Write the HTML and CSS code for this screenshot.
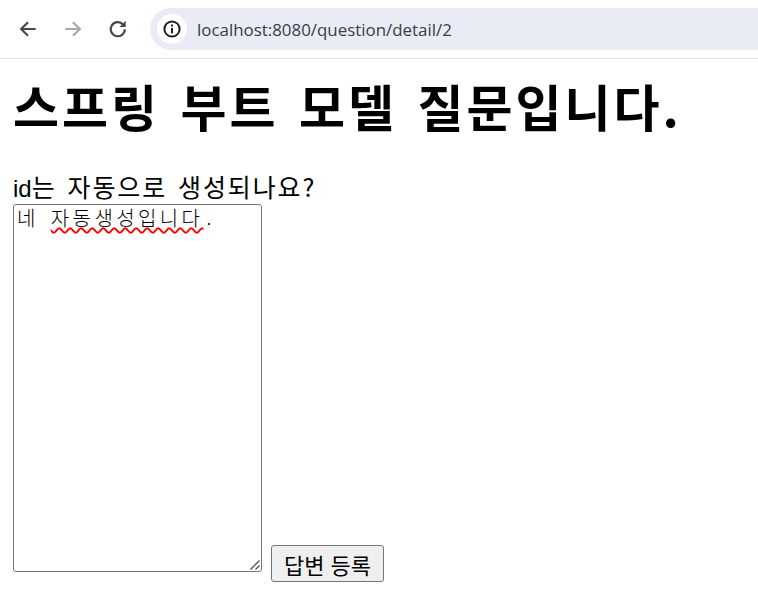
FILE: index.html
```html
<!DOCTYPE html>
<html lang="ko">
<head>
<meta charset="utf-8">
<title>질문 상세</title>
<link rel="stylesheet" href="styles.css">
</head>
<body>
<header class="toolbar">
  <div class="nav">
    <svg class="nav-icon" viewBox="0 0 20 20"><path d="M17 10H4.5M10 3.8 3.8 10l6.2 6.2" fill="none" stroke="#474747" stroke-width="2"/></svg>
    <svg class="nav-icon" viewBox="0 0 20 20"><path d="M3 10h12.5M10 3.8l6.2 6.2-6.2 6.2" fill="none" stroke="#a8a8a8" stroke-width="2"/></svg>
    <svg class="nav-icon" viewBox="0 0 20 20"><path d="M16.2 10.2a6.4 6.4 0 1 1-1.9-4.6" fill="none" stroke="#474747" stroke-width="2"/><path d="M17 2.6v5.6h-5.6z" fill="#474747"/></svg>
  </div>
  <div class="omnibox">
    <span class="site-chip">
      <svg class="info" viewBox="0 0 20 20"><circle cx="10" cy="10" r="7.6" fill="none" stroke="#1f1f1f" stroke-width="2"/><path d="M10 9v5.2M10 5.6v1.9" stroke="#1f1f1f" stroke-width="2"/></svg>
    </span>
    <span class="url">localhost:8080/question/detail/2</span>
  </div>
</header>
<main class="page">
  <h1 class="title">스프링 부트 모델 질문입니다.</h1>
  <div class="question"><span class="latin">id</span>는 자동으로 생성되나요?</div>
  <form class="answer">
    <div class="textarea">
      <span class="word">네</span> <span class="misspelled">자동생성입니다</span><span class="dot">.</span>
      <svg class="resizer" viewBox="0 0 12 12"><path d="M1.5 10.5 10.5 1.5M6.5 10.5l4-4" stroke="#555" stroke-width="1.4"/></svg>
    </div>
    <button class="submit" type="button">답변 등록</button>
  </form>
</main>
</body>
</html>
```
FILE: styles.css
```css
html, body {
  margin: 0;
  padding: 0;
  background: #fff;
  color: #000;
  overflow: hidden;
}
body {
  width: 758px;
  height: 597px;
  font-family: "Noto Sans CJK KR", sans-serif;
}
.toolbar {
  box-sizing: border-box;
  height: 59px;
  display: flex;
  align-items: center;
  padding: 0 0 0 13px;
  border-bottom: 1px solid #e2e3e5;
  gap: 2px;
}
.nav {
  display: flex;
  flex: none;
  gap: 15px;
  width: 135px;
}
.nav-icon {
  flex: none;
  width: 30px;
  height: 22px;
}
.omnibox {
  flex: 1;
  height: 42px;
  margin-right: -30px;
  display: flex;
  align-items: center;
  background: #e9ecf5;
  border-radius: 21px 0 0 21px;
  padding-left: 7px;
  gap: 10px;
}
.site-chip {
  width: 30px;
  height: 30px;
  border-radius: 50%;
  background: #fff;
  display: flex;
  align-items: center;
  justify-content: center;
}
.info {
  width: 20px;
  height: 20px;
}
.url {
  font-family: "Open Sans", "Liberation Sans", sans-serif;
  font-size: 16.9px;
  color: #3c3a4a;
}
.page {
  padding: 0 13px;
}
.title {
  margin: 14px 0 32px;
  font-size: 50px;
  line-height: 64px;
  font-weight: 700;
  letter-spacing: 3px;
  word-spacing: 3.5px;
  white-space: nowrap;
}
.question {
  font-size: 25px;
  line-height: 35px;
  height: 35px;
  letter-spacing: 1.9px;
  word-spacing: 2px;
}
.latin {
  font-family: "Liberation Sans", sans-serif;
  font-size: 24px;
  letter-spacing: 0;
}
.answer {
  display: flex;
  align-items: flex-end;
  gap: 9px;
}
.textarea {
  position: relative;
  box-sizing: border-box;
  width: 249px;
  height: 368px;
  border: 1px solid #767676;
  border-radius: 3px;
  padding: 3px;
  font-size: 20px;
  font-weight: 300;
  line-height: 20px;
  letter-spacing: 3.4px;
  word-spacing: 3px;
  white-space: nowrap;
}
.misspelled {
  text-decoration: underline wavy #f00 1.5px;
  text-underline-offset: 1px;
}
.dot {
  margin-left: 3px;
}
.resizer {
  position: absolute;
  right: 0;
  bottom: 0;
  width: 12px;
  height: 12px;
}
.submit {
  box-sizing: border-box;
  width: 113px;
  height: 37px;
  margin-bottom: -10px;
  padding: 0;
  border: 1px solid #767676;
  border-radius: 3px;
  background: #efefef;
  color: #000;
  font-family: "Noto Sans CJK KR", sans-serif;
  font-size: 22px;
  line-height: 1;
}
```
